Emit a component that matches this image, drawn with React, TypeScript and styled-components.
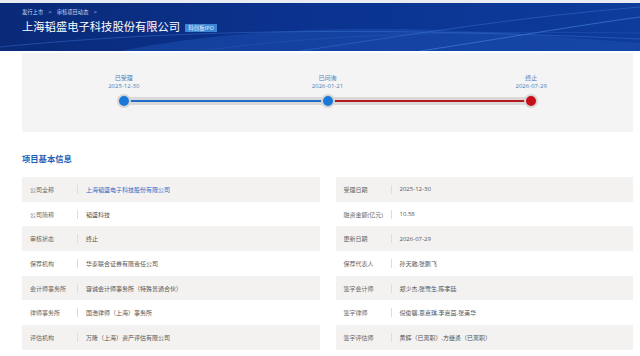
import React from "react";
import styled, { createGlobalStyle } from "styled-components";

const GlobalStyle = createGlobalStyle`
  html, body {
    margin: 0;
    padding: 0;
    background: #ffffff;
    font-family: "Open Sans", "Noto Sans CJK SC", sans-serif;
  }
`;

const steps = [
  { name: "已受理", date: "2025-12-30", color: "#1a78d8" },
  { name: "已问询", date: "2026-01-21", color: "#1a78d8" },
  { name: "终止", date: "2026-07-29", color: "#c8101a" },
];

const segmentColors = ["#1f6fc8", "#b81820"];

const leftRows = [
  { label: "公司全称", value: "上海韬盛电子科技股份有限公司", link: true },
  { label: "公司简称", value: "韬盛科技" },
  { label: "审核状态", value: "终止" },
  { label: "保荐机构", value: "华泰联合证券有限责任公司" },
  { label: "会计师事务所", value: "容诚会计师事务所（特殊普通合伙）" },
  { label: "律师事务所", value: "国浩律师（上海）事务所" },
  { label: "评估机构", value: "万隆（上海）资产评估有限公司" },
];

const rightRows = [
  { label: "受理日期", value: "2025-12-30" },
  { label: "融资金额(亿元)", value: "10.58" },
  { label: "更新日期", value: "2026-07-29" },
  { label: "保荐代表人", value: "孙天驰,张鹏飞" },
  { label: "签字会计师", value: "郑少杰,张雪生,陈孝廷" },
  { label: "签字律师", value: "倪俊骥,恩嘉琪,李嘉茵,张美华" },
  { label: "签字评估师", value: "黄辉（已离职）,方继勇（已离职）" },
];

export default function App() {
  return (
    <>
      <GlobalStyle />
      <Page>
        <Header>
          <Waves viewBox="0 0 640 48" preserveAspectRatio="none">
            <defs>
              <linearGradient id="hg" x1="0" y1="0" x2="1" y2="0">
                <stop offset="0" stopColor="#0a2a78" />
                <stop offset="0.5" stopColor="#0b3390" />
                <stop offset="1" stopColor="#0d3c9c" />
              </linearGradient>
            </defs>
            <rect width="640" height="48" fill="url(#hg)" />
            <path d="M120 48 C260 20 420 22 560 34 L640 40 L640 48 Z" fill="#1a4cae" opacity="0.6" />
            <path d="M0 44 C180 26 380 24 640 36" stroke="#3a72d0" strokeWidth="0.8" fill="none" opacity="0.6" />
            <path d="M300 48 C420 30 520 14 640 4" stroke="#3f7ad6" strokeWidth="0.8" fill="none" opacity="0.55" />
            <path d="M420 48 C500 36 580 22 640 14" stroke="#4a86e0" strokeWidth="1" fill="none" opacity="0.6" />
            <path d="M200 48 C330 30 470 28 640 30" stroke="#2c62c0" strokeWidth="0.6" fill="none" opacity="0.6" />
          </Waves>
          <HeaderInner>
            <Crumbs>
              <span>发行上市</span>
              <CrumbSep>&gt;</CrumbSep>
              <span>审核项目动态</span>
              <CrumbSep>&gt;</CrumbSep>
            </Crumbs>
            <TitleRow>
              <Title>上海韬盛电子科技股份有限公司</Title>
              <Badge>科创板IPO</Badge>
            </TitleRow>
          </HeaderInner>
        </Header>

        <Content>
          <Timeline>
            {steps.map((s, i) => (
              <Step key={s.name}>
                <StepName>{s.name}</StepName>
                <StepDate>{s.date}</StepDate>
                <Track>
                  <Half $color={i > 0 ? segmentColors[i - 1] : undefined} />
                  <Node $color={s.color} />
                  <Half $color={i < steps.length - 1 ? segmentColors[i] : undefined} />
                </Track>
              </Step>
            ))}
          </Timeline>

          <SectionTitle>项目基本信息</SectionTitle>

          <Tables>
            <InfoTable>
              {leftRows.map((r, i) => (
                <Row key={r.label} $shaded={i % 2 === 0}>
                  <Label>{r.label}</Label>
                  <Divider />
                  <Value $link={r.link}>{r.value}</Value>
                </Row>
              ))}
            </InfoTable>
            <InfoTable>
              {rightRows.map((r, i) => (
                <Row key={r.label} $shaded={i % 2 === 0}>
                  <Label>{r.label}</Label>
                  <Divider />
                  <Value>{r.value}</Value>
                </Row>
              ))}
            </InfoTable>
          </Tables>
        </Content>
      </Page>
    </>
  );
}

const Page = styled.div`
  width: 640px;
  height: 356px;
  overflow: hidden;
  border-top: 3px solid #e9edf3;
  box-sizing: border-box;
`;

const Header = styled.div`
  position: relative;
  height: 48px;
  overflow: hidden;
  background: #0b2f86;
`;

const Waves = styled.svg`
  position: absolute;
  inset: 0;
  width: 100%;
  height: 100%;
`;

const HeaderInner = styled.div`
  position: relative;
  padding: 6px 0 0 22px;
  display: flex;
  flex-direction: column;
  gap: 3px;
`;

const Crumbs = styled.div`
  display: flex;
  align-items: center;
  gap: 3px;
  font-size: 5.3px;
  line-height: 7px;
  color: #c9d6f0;
`;

const CrumbSep = styled.span`
  font-size: 6px;
  margin: 0 2px;
`;

const TitleRow = styled.div`
  display: flex;
  align-items: center;
  gap: 5px;
`;

const Title = styled.div`
  font-size: 11.3px;
  line-height: 16px;
  color: #ffffff;
`;

const Badge = styled.div`
  background: #3c86d6;
  color: #e6f0ff;
  font-size: 5.5px;
  line-height: 8px;
  padding: 0 3px;
  margin-top: 1px;
`;

const Content = styled.div`
  width: 611px;
  margin-left: 22px;
  padding-top: 2px;
`;

const Timeline = styled.div`
  background: #f4f4f4;
  height: 79px;
  box-sizing: border-box;
  padding-top: 21px;
  display: grid;
  grid-template-columns: repeat(3, 1fr);
`;

const Step = styled.div`
  display: flex;
  flex-direction: column;
  align-items: center;
`;

const StepName = styled.div`
  font-size: 6px;
  line-height: 8px;
  color: #4d7fb8;
`;

const StepDate = styled.div`
  font-size: 6px;
  line-height: 8px;
  color: #4d7fb8;
`;

const Track = styled.div`
  width: 100%;
  height: 14px;
  margin-top: 4px;
  display: flex;
  align-items: center;
`;

const Half = styled.div<{ $color?: string }>`
  flex: 1;
  height: 8px;
  background: ${({ $color }) => ($color ? "#dad8d8" : "transparent")};
  display: flex;
  align-items: center;

  &::after {
    content: "";
    display: block;
    width: 100%;
    height: 2px;
    background: ${({ $color }) => $color ?? "transparent"};
  }
`;

const Node = styled.div<{ $color: string }>`
  width: 10px;
  height: 10px;
  border-radius: 50%;
  background: ${({ $color }) => $color};
  border: 2px solid #d6d6d6;
  flex: none;
  margin: 0 -7px;
  position: relative;
  z-index: 1;
`;

const SectionTitle = styled.div`
  margin-top: 21px;
  font-size: 8.3px;
  line-height: 12px;
  font-weight: 700;
  color: #1a5fb8;
`;

const Tables = styled.div`
  margin-top: 12px;
  display: grid;
  grid-template-columns: 1fr 1fr;
  column-gap: 16px;
`;

const InfoTable = styled.div`
  display: flex;
  flex-direction: column;
`;

const Row = styled.div<{ $shaded?: boolean }>`
  height: 24.7px;
  display: flex;
  align-items: center;
  background: ${({ $shaded }) => ($shaded ? "#f3f2f1" : "#ffffff")};
  font-size: 6px;
`;

const Label = styled.div`
  width: 47px;
  padding-left: 8px;
  color: #666666;
  white-space: nowrap;
`;

const Divider = styled.div`
  width: 1px;
  height: 9px;
  background: #dddddd;
  margin-right: 8px;
`;

const Value = styled.div<{ $link?: boolean }>`
  color: ${({ $link }) => ($link ? "#2a6cc8" : "#555555")};
  white-space: nowrap;
`;
